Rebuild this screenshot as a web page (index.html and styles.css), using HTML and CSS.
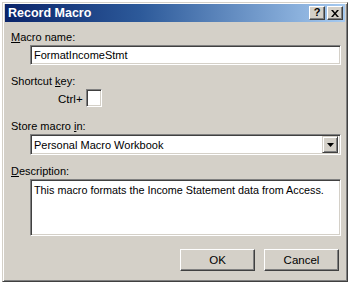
FILE: index.html
```html
<!DOCTYPE html>
<html>
<head>
<meta charset="utf-8">
<link rel="stylesheet" href="styles.css">
</head>
<body>
<div class="dialog">
  <div class="titlebar">
    <span class="title">Record Macro</span>
    <div class="tbtns">
      <span class="tbtn help">?</span>
      <span class="tbtn close">
        <svg width="8" height="7" viewBox="0 0 8 7"><path d="M0 0h2l2 2.5L6 0h2L5 3.5 8 7H6L4 4.5 2 7H0l3-3.5z" fill="#000"/></svg>
      </span>
    </div>
  </div>
  <div class="body">
    <div class="label l1"><u>M</u>acro name:</div>
    <div class="field input">FormatIncomeStmt</div>
    <div class="label l2">Shortcut <u>k</u>ey:</div>
    <div class="ctrlrow">
      <span class="ctrl">Ctrl+</span>
      <span class="field keybox"></span>
    </div>
    <div class="label l3">Store macro <u>i</u>n:</div>
    <div class="field select">
      <span class="seltext">Personal Macro Workbook</span>
      <span class="arrow"><svg width="7" height="4" viewBox="0 0 7 4"><path d="M0 0h7L3.5 4z" fill="#000"/></svg></span>
    </div>
    <div class="label l4"><u>D</u>escription:</div>
    <div class="field textarea">This macro formats the Income Statement data from Access.</div>
    <div class="buttons">
      <span class="btn">OK</span>
      <span class="btn">Cancel</span>
    </div>
  </div>
</div>
</body>
</html>
```

FILE: styles.css
```css
html, body {
  margin: 0;
  padding: 0;
}
body {
  width: 350px;
  height: 283px;
  overflow: hidden;
  background: #fff;
  font-family: "Liberation Sans", Arial, sans-serif;
  font-size: 11px;
  color: #000;
}
.dialog {
  box-sizing: border-box;
  margin: 2px 0 0 2px;
  width: 346px;
  height: 280px;
  background: #d4d0c8;
  border-top: 1px solid #d4d0c8;
  border-left: 1px solid #d4d0c8;
  border-right: 1px solid #404040;
  border-bottom: 1px solid #404040;
  box-shadow: inset 1px 1px 0 #fff, inset -1px -1px 0 #808080;
  padding: 1px 2px 0 2px;
  display: flex;
  flex-direction: column;
}
.titlebar {
  height: 18px;
  background: linear-gradient(to right, #0a246a 0%, #2d5a9a 40%, #a6caf0 100%);
  display: flex;
  align-items: center;
  justify-content: space-between;
  padding: 0 2px 0 3px;
}
.title {
  color: #fff;
  font-weight: bold;
  font-size: 12.5px;
}
.tbtns {
  display: flex;
  gap: 2px;
}
.tbtn {
  box-sizing: border-box;
  width: 16px;
  height: 14px;
  background: #d4d0c8;
  border-top: 1px solid #fff;
  border-left: 1px solid #fff;
  border-right: 1px solid #404040;
  border-bottom: 1px solid #404040;
  box-shadow: inset -1px -1px 0 #808080;
  display: flex;
  align-items: center;
  justify-content: center;
  font-weight: bold;
  font-size: 11px;
  line-height: 1;
}
.help {
  padding-bottom: 1px;
}
.body {
  padding: 0 4px 0 6px;
  display: flex;
  flex-direction: column;
}
.label {
  height: 14px;
  line-height: 14px;
}
.label u {
  text-decoration: underline;
  text-underline-offset: 1px;
}
.l1 { margin-top: 8px; }
.l2 { margin-top: 9px; }
.l3 { margin-top: 12px; }
.l4 { margin-top: 9px; }
.field {
  box-sizing: border-box;
  background: #fff;
  border-top: 1px solid #808080;
  border-left: 1px solid #808080;
  border-right: 1px solid #fff;
  border-bottom: 1px solid #fff;
  box-shadow: inset 1px 1px 0 #404040, inset -1px -1px 0 #d4d0c8;
}
.input {
  margin: 1px 0 0 19px;
  width: 311px;
  height: 20px;
  line-height: 18px;
  padding-left: 3px;
}
.ctrlrow {
  margin-top: 1px;
  height: 18px;
  display: flex;
  align-items: center;
  padding-left: 47px;
}
.ctrl {
  font-size: 11.5px;
  margin-right: 3px;
  padding-top: 2px;
}
.keybox {
  width: 16px;
  height: 18px;
}
.select {
  margin: 1px 0 0 19px;
  width: 311px;
  height: 21px;
  display: flex;
  align-items: center;
  justify-content: space-between;
  padding: 2px 2px 2px 3px;
}
.arrow {
  box-sizing: border-box;
  width: 16px;
  height: 17px;
  background: #d4d0c8;
  border-top: 1px solid #d4d0c8;
  border-left: 1px solid #d4d0c8;
  border-right: 1px solid #404040;
  border-bottom: 1px solid #404040;
  box-shadow: inset 1px 1px 0 #fff, inset -1px -1px 0 #808080;
  display: flex;
  align-items: center;
  justify-content: center;
}
.textarea {
  margin: 1px 0 0 19px;
  width: 311px;
  height: 57px;
  padding: 3px 3px;
  line-height: 14px;
  font-size: 10.8px;
  white-space: nowrap;
  overflow: hidden;
}
.buttons {
  margin-top: 13px;
  display: flex;
  justify-content: flex-end;
  gap: 9px;
  padding-right: 2px;
}
.btn {
  box-sizing: border-box;
  width: 75px;
  height: 22px;
  background: #d4d0c8;
  border-top: 1px solid #fff;
  border-left: 1px solid #fff;
  border-right: 1px solid #404040;
  border-bottom: 1px solid #404040;
  box-shadow: inset -1px -1px 0 #808080;
  display: flex;
  align-items: center;
  justify-content: center;
  font-size: 11.5px;
}
```
